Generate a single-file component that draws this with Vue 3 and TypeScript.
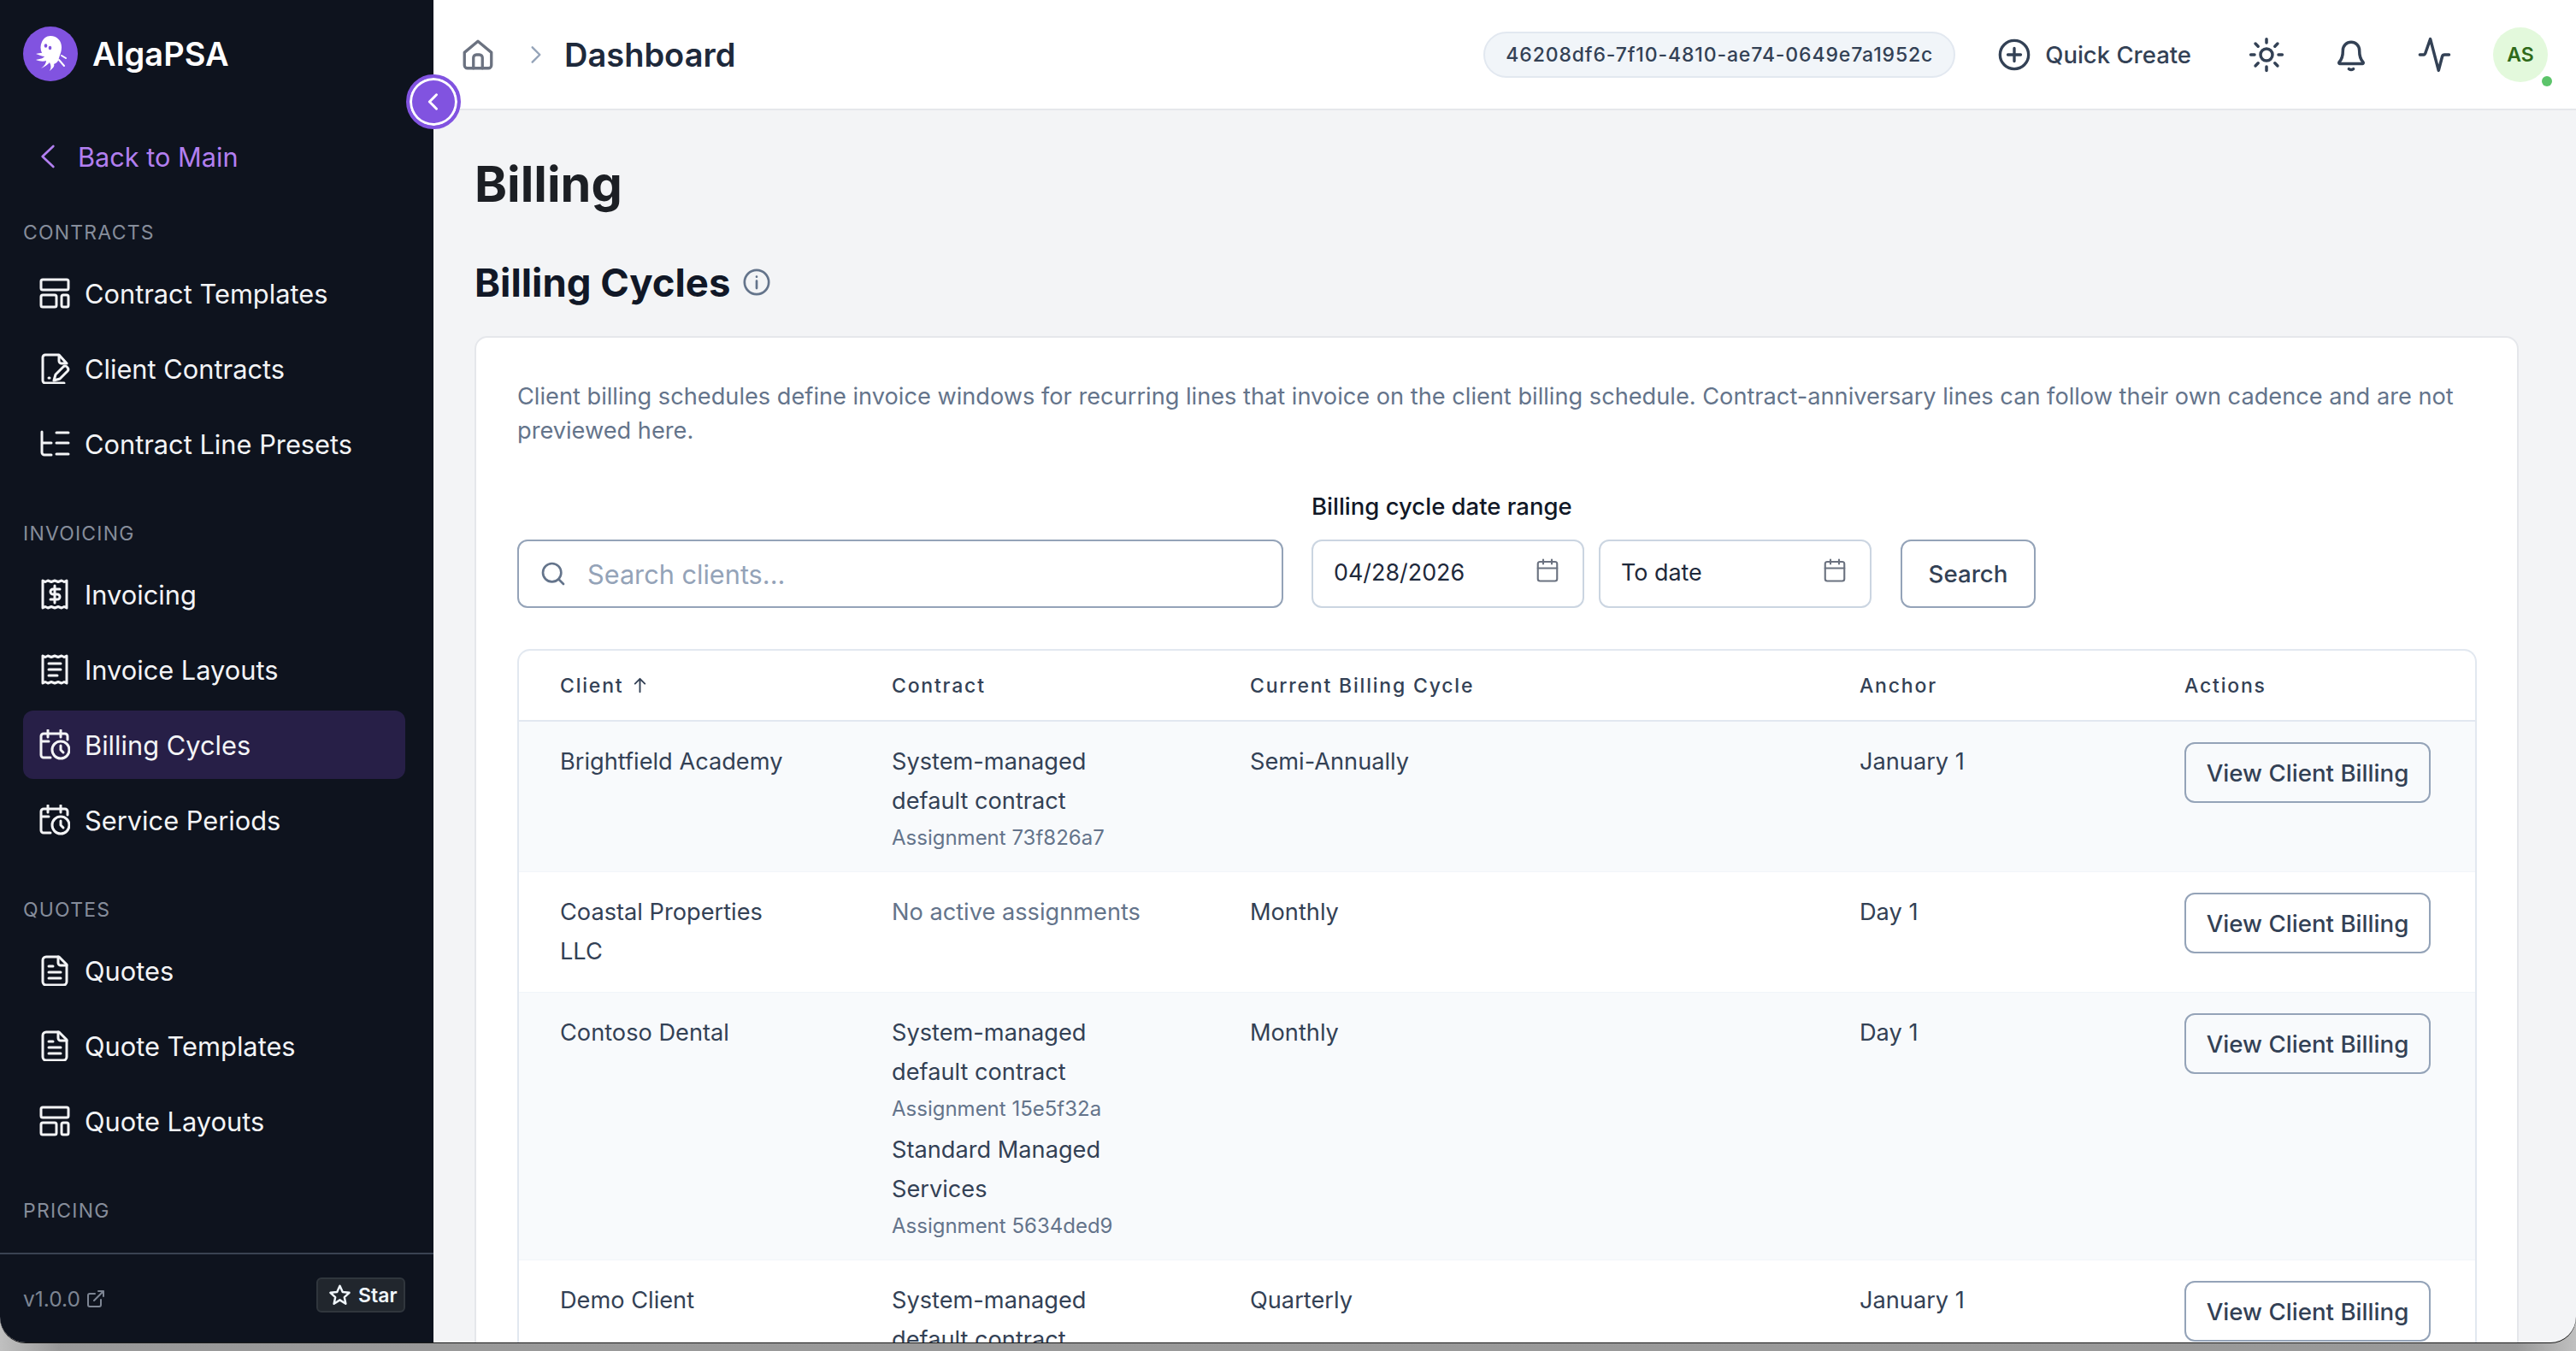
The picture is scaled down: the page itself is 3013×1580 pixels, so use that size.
<script setup lang="ts">
interface NavItem { label: string; icon: string; active?: boolean }
interface NavGroup { title: string; items: NavItem[] }
interface Assignment { lines: string[]; sub: string }
interface Row { client: string[]; assignments: Assignment[]; none?: string; cycle: string; anchor: string }

const groups: NavGroup[] = [
  { title: 'CONTRACTS', items: [
    { label: 'Contract Templates', icon: 'layout' },
    { label: 'Client Contracts', icon: 'filepen' },
    { label: 'Contract Line Presets', icon: 'list' },
  ] },
  { title: 'INVOICING', items: [
    { label: 'Invoicing', icon: 'receipt' },
    { label: 'Invoice Layouts', icon: 'receipt2' },
    { label: 'Billing Cycles', icon: 'calclock', active: true },
    { label: 'Service Periods', icon: 'calclock' },
  ] },
  { title: 'QUOTES', items: [
    { label: 'Quotes', icon: 'file' },
    { label: 'Quote Templates', icon: 'file' },
    { label: 'Quote Layouts', icon: 'layout' },
  ] },
  { title: 'PRICING', items: [] },
]

const rows: Row[] = [
  { client: ['Brightfield Academy'], assignments: [{ lines: ['System-managed', 'default contract'], sub: 'Assignment 73f826a7' }], cycle: 'Semi-Annually', anchor: 'January 1' },
  { client: ['Coastal Properties', 'LLC'], assignments: [], none: 'No active assignments', cycle: 'Monthly', anchor: 'Day 1' },
  { client: ['Contoso Dental'], assignments: [
    { lines: ['System-managed', 'default contract'], sub: 'Assignment 15e5f32a' },
    { lines: ['Standard Managed', 'Services'], sub: 'Assignment 5634ded9' },
  ], cycle: 'Monthly', anchor: 'Day 1' },
  { client: ['Demo Client'], assignments: [{ lines: ['System-managed', 'default contract'], sub: 'Assignment' }], cycle: 'Quarterly', anchor: 'January 1' },
]
</script>

<template>
  <div class="stage">
    <div class="window">
      <aside class="sidebar">
        <div class="brand">
          <span class="logo">
            <svg viewBox="0 0 64 64" width="64" height="64">
              <circle cx="32" cy="32" r="32" fill="#8153e0" />
              <path fill="#fff" d="M32 11C40 11 45 17 45 24C45 30 43 33 42 37C41 41 39 43 36 44C37 46 36 48 31 52C33 48 33 46 31 42C29 44 26 47 21 49C25 46 27 43 27 40C24 41 20 41 15 39C20 38 24 37 25 35C22 35 19 33 15 32C18 31 20 31 22 31C20 27 20 22 22 18C24 14 27 11 32 11Z" />
              <path fill="none" stroke="#fff" stroke-width="2" stroke-linecap="round" d="M42 39L48 46M45 34L50 37" />
              <ellipse cx="26.500" cy="22.500" rx="1.800" ry="2.200" fill="#8153e0" />
              <ellipse cx="31.500" cy="25" rx="1.800" ry="2.200" fill="#8153e0" />
            </svg>
          </span>
          <span class="brand-name">AlgaPSA</span>
        </div>
        <div class="back">
          <svg class="back-ic" viewBox="0 0 24 24"><path d="M16 3L6.500 12L16 21" /></svg>
          <span>Back to Main</span>
        </div>
        <nav class="nav">
          <section v-for="g in groups" :key="g.title" class="group">
            <h3 class="group-title">{{ g.title }}</h3>
            <a v-for="it in g.items" :key="it.label" class="nav-item" :class="{ active: it.active }">
              <svg class="nav-ic" viewBox="0 0 36 36">
                <template v-if="it.icon === 'layout'">
                  <rect x="2" y="2" width="32" height="12" rx="2" /><rect x="2" y="20" width="18" height="14" rx="2" /><rect x="26" y="20" width="8" height="14" rx="2" />
                </template>
                <template v-else-if="it.icon === 'filepen'">
                  <path d="M32 12l-9-10H7a3 3 0 0 0-3 3v27a3 3 0 0 0 3 3h22M23 2v7a3 3 0 0 0 3 3h6" /><path d="M33 17a3 3 0 0 0-5-1l-9 9-2 7 7-2 9-9a3 3 0 0 0 0-4z" /><path d="M11 29h1" />
                </template>
                <template v-else-if="it.icon === 'list'">
                  <path d="M3 4v24a3 3 0 0 0 3 3h8M3 17h11M20 5h14M20 17h14M20 30h14" />
                </template>
                <template v-else-if="it.icon === 'receipt'">
                  <path d="M4 2v32l3-1.500 3 1.500 4-1.500 4 1.500 4-1.500 4 1.500 3-1.500 3 1.500V2l-3 1.500L26 2l-4 1.500L18 2l-4 1.500L10 2 7 3.500z" /><path d="M24 12h-8a3 3 0 0 0 0 6h5a3 3 0 0 1 0 6h-8M18 8v20" />
                </template>
                <template v-else-if="it.icon === 'receipt2'">
                  <path d="M4 2v32l3-1.500 3 1.500 4-1.500 4 1.500 4-1.500 4 1.500 3-1.500 3 1.500V2l-3 1.500L26 2l-4 1.500L18 2l-4 1.500L10 2 7 3.500z" /><path d="M11 11h14M11 18h14M11 25h10" />
                </template>
                <template v-else-if="it.icon === 'calclock'">
                  <path d="M13 33H5a3 3 0 0 1-3-3V8a3 3 0 0 1 3-3h25a3 3 0 0 1 3 3v4M10 1v8M25 1v8M2 14h9" /><circle cx="25" cy="24" r="10" /><path d="M25 19v5l3 3" />
                </template>
                <template v-else>
                  <path d="M23 2H8a4 4 0 0 0-4 4v25a4 4 0 0 0 4 4h20a4 4 0 0 0 4-4V11z" /><path d="M22 2v7a3 3 0 0 0 3 3h7M11 13h5M11 20h14M11 27h14" />
                </template>
              </svg>
              <span>{{ it.label }}</span>
            </a>
          </section>
        </nav>
        <footer class="side-foot">
          <span class="version">v1.0.0
            <svg viewBox="0 0 24 24" class="ext"><path d="M18 13v6a2 2 0 0 1-2 2H5a2 2 0 0 1-2-2V8a2 2 0 0 1 2-2h6M15 3h6v6M10 14L21 3" /></svg>
          </span>
          <span class="star">
            <svg viewBox="0 0 24 24" class="star-ic"><path d="M12 2.500l2.900 6.300 6.900.8-5.100 4.700 1.400 6.800L12 17.200l-6.100 3.900 1.400-6.800L2.200 9.600l6.900-.8z" /></svg>
            Star
          </span>
        </footer>
      </aside>

      <button class="collapse" aria-label="Collapse sidebar">
        <svg viewBox="0 0 24 24"><path d="M15 5l-7 7 7 7" /></svg>
      </button>

      <div class="main">
        <header class="topbar">
          <svg class="home" viewBox="0 0 24 24"><path d="M3 10.500L12 3l9 7.500V19a2 2 0 0 1-2 2H5a2 2 0 0 1-2-2z" /><path d="M9 21v-7a2 2 0 0 1 2-2h2a2 2 0 0 1 2 2v7" /></svg>
          <svg class="crumb" viewBox="0 0 24 24"><path d="M8 4l8 8-8 8" /></svg>
          <span class="crumb-title">Dashboard</span>
          <span class="spacer"></span>
          <span class="tenant">46208df6-7f10-4810-ae74-0649e7a1952c</span>
          <span class="quick">
            <svg viewBox="0 0 24 24"><circle cx="12" cy="12" r="10" /><path d="M12 7.500v9M7.500 12h9" /></svg>
            Quick Create
          </span>
          <svg class="tool sun" viewBox="0 0 24 24"><circle cx="12" cy="12" r="4" /><path d="M12 1.500v2.500M12 20v2.500M1.500 12H4M20 12h2.500M4.600 4.600l1.800 1.800M17.600 17.600l1.800 1.800M4.600 19.400l1.800-1.800M17.600 6.400l1.800-1.800" /></svg>
          <svg class="tool bell" viewBox="0 0 24 24"><path d="M6.500 9a5.500 5.500 0 0 1 11 0c0 4 .5 6 2.500 8a.6.6 0 0 1-.4 1H4.400a.6.6 0 0 1-.4-1C6 15 6.500 13 6.500 9z" /><path d="M10.500 21.500q1.500 1 3 0" /></svg>
          <svg class="tool pulse" viewBox="0 0 24 24"><path d="M2.500 12H5q1 0 1.500-2L9.500 1.500 15 22.500 17.500 13q.3-1 1.500-1h3" /></svg>
          <span class="avatar">AS<i class="dot"></i></span>
        </header>

        <main class="content">
          <h1 class="page-title">Billing</h1>
          <div class="section-head">
            <h2>Billing Cycles</h2>
            <svg class="info" viewBox="0 0 24 24"><circle cx="12" cy="12" r="10" /><path d="M12 11v6M12 7.500v.1" /></svg>
          </div>
          <section class="card">
            <p class="desc">Client billing schedules define invoice windows for recurring lines that invoice on the client billing schedule. Contract-anniversary lines can follow their own cadence and are not previewed here.</p>
            <div class="filters">
              <div class="search-box">
                <svg class="search-ic" viewBox="0 0 24 24"><circle cx="11" cy="11" r="8" /><path d="M21 21l-4.300-4.300" /></svg>
                <span>Search clients...</span>
              </div>
              <div class="range">
                <label class="range-label">Billing cycle date range</label>
                <div class="range-inputs">
                  <div class="date"><span>04/28/2026</span><svg class="cal" viewBox="0 0 24 24"><rect x="3" y="4" width="18" height="18" rx="2" /><path d="M16 2v4M8 2v4M3 10h18" /></svg></div>
                  <div class="date"><span>To date</span><svg class="cal" viewBox="0 0 24 24"><rect x="3" y="4" width="18" height="18" rx="2" /><path d="M16 2v4M8 2v4M3 10h18" /></svg></div>
                </div>
              </div>
              <button class="btn search-btn">Search</button>
            </div>
            <div class="table">
              <div class="tr thead">
                <div class="td">Client <svg class="sort" viewBox="0 0 24 24"><path d="M12 20V4M6 10l6-6 6 6" /></svg></div>
                <div class="td">Contract</div>
                <div class="td">Current Billing Cycle</div>
                <div class="td">Anchor</div>
                <div class="td">Actions</div>
              </div>
              <div v-for="(r, i) in rows" :key="r.client[0]" class="tr row" :class="{ alt: i % 2 === 0 }">
                <div class="td"><div v-for="l in r.client" :key="l">{{ l }}</div></div>
                <div class="td">
                  <div v-if="r.none" class="none">{{ r.none }}</div>
                  <div v-for="a in r.assignments" :key="a.sub" class="assign">
                    <div v-for="l in a.lines" :key="l">{{ l }}</div>
                    <div class="sub">{{ a.sub }}</div>
                  </div>
                </div>
                <div class="td">{{ r.cycle }}</div>
                <div class="td">{{ r.anchor }}</div>
                <div class="td"><button class="btn view">View Client Billing</button></div>
              </div>
            </div>
          </section>
        </main>
      </div>
    </div>
  </div>
</template>

<style>
html, body { margin: 0; padding: 0; }
</style>

<style scoped>
* { box-sizing: border-box; }
.stage {
  width: 3013px; height: 1580px; overflow: hidden;
  background:
    linear-gradient(to right, rgba(205,205,205,.75), transparent 70px, transparent calc(100% - 70px), rgba(205,205,205,.75)),
    linear-gradient(#585858, #999);
  font-family: Inter, "Noto Sans", sans-serif;
}
.window {
  position: relative; display: flex; width: 3013px; height: 1570px; overflow: hidden;
  border-radius: 0 0 30px 30px; background: #f3f4f6;
  box-shadow: 0 1px 0 #1a1a1a;
}
.sidebar {
  flex: none; width: 507px; height: 100%; display: flex; flex-direction: column;
  background: #0e131e; color: #f3f4f6;
}
.brand { display: flex; align-items: center; gap: 17px; height: 64px; margin: 31px 0 0 27px; flex: none; }
.logo { width: 64px; height: 64px; display: block; }
.logo svg { display: block; }
.brand-name { font-size: 38px; font-weight: 600; color: #fff; }
.back { display: flex; align-items: center; gap: 18px; margin: 65px 0 0 41px; flex: none; color: #b27ff0; font-size: 30.700px; height: 46px; }
.back-ic { width: 32px; height: 32px; fill: none; stroke: #b27ff0; stroke-width: 2; stroke-linecap: round; stroke-linejoin: round; flex: none; }
.nav { flex: 1; min-height: 0; overflow: hidden; padding: 0 33px 0 27px; }
.group { margin-top: 51px; }
.group + .group { margin-top: 50px; }
.group-title { margin: 0; font-size: 23px; font-weight: 400; letter-spacing: 1.200px; color: #868d9b; height: 31px; line-height: 31px; }
.nav-item {
  display: flex; align-items: center; height: 80px; margin-top: 8px; padding-left: 19px; border-radius: 12px;
  font-size: 30.800px; color: #f3f4f6;
}
.group-title + .nav-item { margin-top: 15px; }
.nav-item.active { background: #271f47; }
.nav-ic { width: 36px; height: 36px; flex: none; margin-right: 17px; fill: none; stroke: #f3f4f6; stroke-width: 3; stroke-linecap: round; stroke-linejoin: round; }
.side-foot {
  flex: none; height: 105px; border-top: 2px solid #3a4252; display: flex; align-items: flex-start; justify-content: space-between;
  padding: 27px 33px 0 27px;
}
.version { display: flex; align-items: center; gap: 6px; margin-top: 10px; font-size: 24.500px; color: #7d8593; }
.ext { width: 24px; height: 24px; fill: none; stroke: #7d8593; stroke-width: 2; stroke-linecap: round; stroke-linejoin: round; }
.star {
  display: flex; align-items: center; gap: 8px; width: 104px; height: 41px; padding-left: 12px; border: 2px solid #30363d; border-radius: 6px;
  background: #21262d; color: #f0f6fc; font-size: 23px; font-weight: 600;
}
.star-ic { width: 27px; height: 27px; fill: none; stroke: #f0f6fc; stroke-width: 2.200; stroke-linejoin: round; flex: none; }
.collapse {
  position: absolute; left: 475px; top: 87px; width: 64px; height: 64px; padding: 0; border: 4px solid #8153e0; border-radius: 50%;
  background: #8153e0; box-shadow: inset 0 0 0 3px #fff; display: flex; align-items: center; justify-content: center; z-index: 5;
}
.collapse svg { width: 28px; height: 28px; fill: none; stroke: #fff; stroke-width: 2.500; stroke-linecap: round; stroke-linejoin: round; }
.main { flex: 1; min-width: 0; display: flex; flex-direction: column; height: 100%; }
.topbar {
  flex: none; height: 129px; background: #fff; border-bottom: 2px solid #e5e7eb; display: flex; align-items: center; padding: 0 33px 0 31px;
}
.home { width: 42px; height: 42px; fill: none; stroke: #6b7280; stroke-width: 1.900; stroke-linecap: round; stroke-linejoin: round; flex: none; }
.crumb { width: 26px; height: 26px; margin-left: 34px; fill: none; stroke: #94a3b8; stroke-width: 2.200; stroke-linecap: round; stroke-linejoin: round; flex: none; }
.crumb-title { margin-left: 20px; font-size: 38px; font-weight: 600; color: #1e293b; }
.spacer { flex: 1; }
.tenant {
  height: 54px; width: 552px; display: flex; align-items: center; justify-content: center; border: 2px solid #e2e8f0; border-radius: 27px; background: #f1f5f9;
  color: #334155; font-size: 23px; font-weight: 500; letter-spacing: 0.870px; white-space: nowrap;
}
.quick { display: flex; align-items: center; gap: 16px; margin-left: 49px; font-size: 27.500px; font-weight: 500; color: #334155; }
.quick svg { width: 40px; height: 40px; fill: none; stroke: #334155; stroke-width: 2; stroke-linecap: round; }
.tool { flex: none; width: 42px; height: 42px; fill: none; stroke: #334155; stroke-width: 2; stroke-linecap: round; stroke-linejoin: round; }
.sun { margin-left: 67px; }
.bell { margin-left: 57px; }
.pulse { margin-left: 55px; }
.avatar {
  position: relative; flex: none; width: 64px; height: 64px; margin-left: 48px; border-radius: 50%; background: #e3f9dc; color: #2f6a1a;
  font-size: 23px; font-weight: 600; display: flex; align-items: center; justify-content: center;
}
.dot { position: absolute; right: -5px; bottom: -5px; width: 12px; height: 12px; border-radius: 50%; background: #5cc46a; }
.content { flex: 1; min-height: 0; overflow: hidden; padding: 0 67px 0 48px; }
.page-title { margin: 0; padding-top: 49px; font-size: 57.600px; line-height: 74px; font-weight: 700; color: #1c1f24; }
.section-head { display: flex; align-items: center; gap: 14px; margin-top: 48px; height: 60px; }
.section-head h2 { margin: 0; font-size: 45.500px; font-weight: 700; color: #111827; }
.info { width: 34px; height: 34px; fill: none; stroke: #64748b; stroke-width: 1.900; stroke-linecap: round; }
.card { margin-top: 33px; background: #fff; border: 2px solid #e5e7eb; border-radius: 15px; padding: 49px 48px 0; height: 1300px; }
.desc { margin: 0; font-size: 27.200px; line-height: 40px; color: #64748b; }
.filters { display: flex; align-items: flex-end; margin-top: 48px; }
.search-box {
  flex: none; width: 896px; height: 80px; display: flex; align-items: center; border: 2px solid #94a3b8; border-radius: 12px; padding-left: 24px;
  color: #94a3b8; font-size: 30.700px;
}
.search-ic { width: 32px; height: 32px; margin-right: 24px; fill: none; stroke: #64748b; stroke-width: 2; stroke-linecap: round; }
.range { margin-left: 33px; }
.range-label { display: block; font-size: 27.500px; line-height: 40px; font-weight: 500; color: #111827; margin-bottom: 19px; }
.range-inputs { display: flex; gap: 17px; }
.date {
  width: 319px; height: 80px; display: flex; align-items: center; justify-content: space-between; border: 2px solid #cbd5e1; border-radius: 12px; padding: 0 26px 4px 24px;
  font-size: 26.900px; color: #1e293b;
}
.cal { width: 30px; height: 30px; margin-bottom: 4px; fill: none; stroke: #6b7280; stroke-width: 1.700; stroke-linecap: round; stroke-linejoin: round; }
.btn { border: 2px solid #94a3b8; border-radius: 12px; background: #fff; color: #334155; font-family: inherit; font-size: 27.700px; font-weight: 500; padding: 0; }
.search-btn { width: 158px; height: 80px; margin-left: 34px; }
.table { margin-top: 48px; width: 2292px; border: 2px solid #e2e8f0; border-bottom: 0; border-radius: 15px 15px 0 0; overflow: hidden; }
.tr { display: grid; grid-template-columns: 388px 419px 713px 380px 1fr; }
.td { padding-left: 48px; }
.tr .td:nth-child(4) { padding-right: 2px; }
.thead { height: 83px; align-items: center; border-bottom: 2px solid #e2e8f0; font-size: 23px; font-weight: 500; letter-spacing: 1.800px; color: #334155; }
.thead .td { display: flex; align-items: center; gap: 8px; }
.sort { width: 23px; height: 23px; fill: none; stroke: #334155; stroke-width: 2; stroke-linecap: round; stroke-linejoin: round; }
.row { padding: 24px 0; font-size: 27.200px; line-height: 46px; color: #334155; border-bottom: 1px solid #f1f5f9; }
.row.alt { background: #f8fafc; }
.none { color: #64748b; }
.assign + .assign { margin-top: 10px; }
.sub { padding-top: 4px; font-size: 24px; line-height: 31px; color: #64748b; }
.view { width: 288px; height: 71px; line-height: normal; background: transparent; display: block; }
</style>
